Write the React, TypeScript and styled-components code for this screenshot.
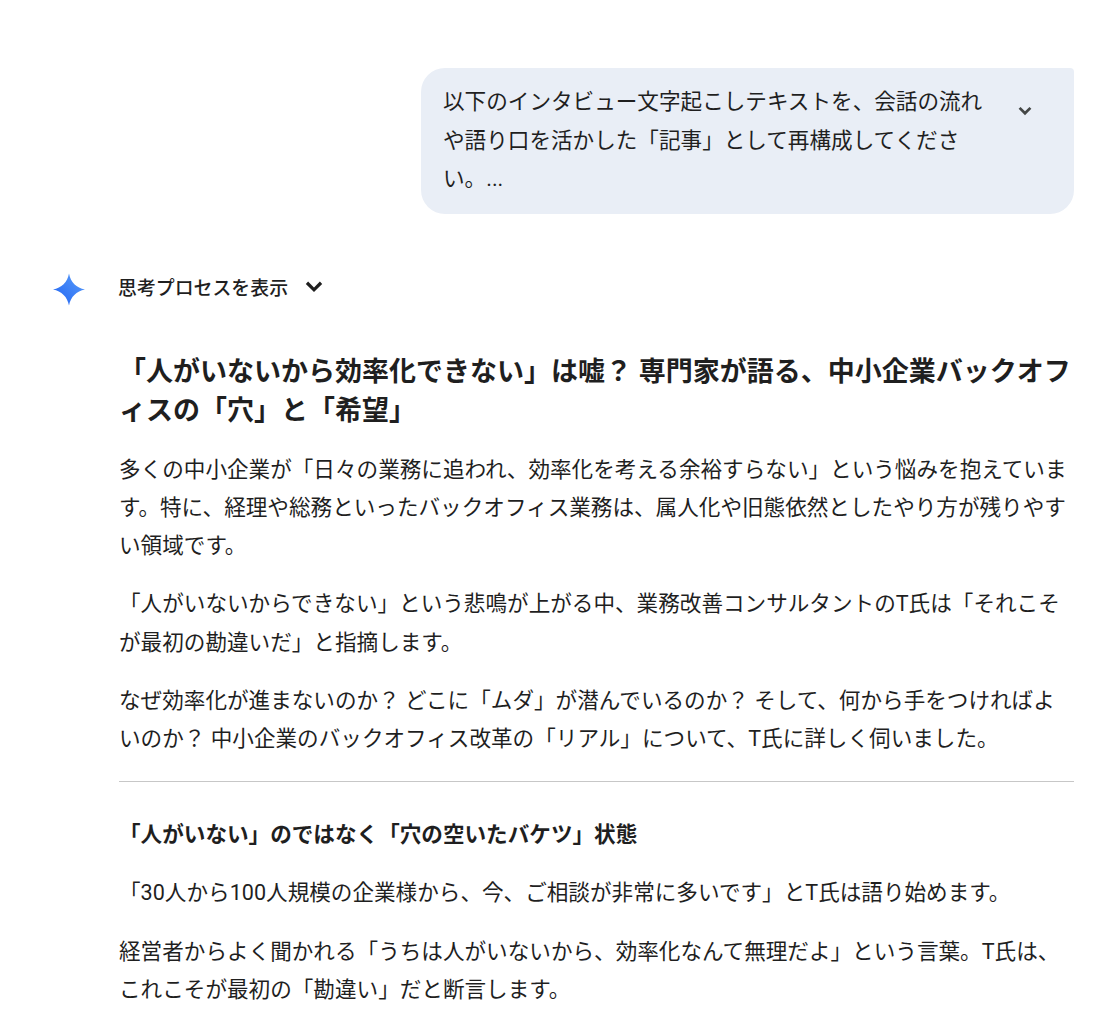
import React from "react";
import styled, { createGlobalStyle } from "styled-components";

const Global = createGlobalStyle`
  html, body { margin: 0; padding: 0; background: #fff; }
  body { font-family: "Roboto", "Noto Sans CJK JP", sans-serif; color: #1f1f1f; }
`;
const Page = styled.div`
  width: 1114px; height: 1027px; overflow: hidden; box-sizing: border-box;
  padding: 68px 40px 0 53px; display: flex; flex-direction: column;
`;
const UserRow = styled.div`display: flex; justify-content: flex-end;`;
const Bubble = styled.div`
  width: 653px; height: 146px; box-sizing: border-box; background: #e9eef6;
  border-radius: 24px 4px 24px 24px; padding: 15px 36px 0 22px; display: flex; justify-content: space-between;
`;
const BubbleText = styled.p`margin: 0; width: 546px; font-size: 21.6px; line-height: 38.7px;`;
const Chevron = styled.svg`flex: none; margin-top: 14px; color: #444746;`;
const Thinking = styled.div`display: flex; align-items: center; margin-top: 55px; height: 34px;`;
const Spark = styled.svg`flex: none; margin-right: 33px; margin-top: 6px;`;
const ThinkLabel = styled.span`font-size: 18.9px; font-weight: 500;`;
const ThinkChevron = styled.svg`flex: none; margin-left: 13px;`;
const Content = styled.div`margin-left: 66px;`;
const Title = styled.h2`margin: 50px 0 0; font-size: 27px; line-height: 39px; font-weight: 700;`;
const Para = styled.p`margin: 19.6px 0 0; font-size: 21.6px; line-height: 38.4px;`;
const LastPara = styled(Para)`margin-top: 21px;`;
const Rule = styled.hr`border: 0; border-top: 1px solid #c7c7c7; margin: 22px 0 0;`;
const Sub = styled.h3`margin: 34px 0 0; font-size: 21.6px; line-height: 38.4px; font-weight: 700;`;

export default function App() {
  return (
    <Page>
      <Global />
      <UserRow>
        <Bubble>
          <BubbleText>以下のインタビュー文字起こしテキストを、会話の流れや語り口を活かした「記事」として再構成してください。...</BubbleText>
          <Chevron width="26" height="26" viewBox="0 0 24 24" fill="none" stroke="currentColor" strokeWidth="2.5"><path d="M7 10l5 5 5-5" /></Chevron>
        </Bubble>
      </UserRow>
      <Thinking>
        <Spark width="32" height="33" viewBox="0 0 32 32">
          <defs><linearGradient id="g" x1="0" y1="1" x2="1" y2="0"><stop offset="0" stopColor="#1f62f2" /><stop offset="1" stopColor="#5b9ffa" /></linearGradient></defs>
          <path d="M16 0C17.500 8.500 23.500 14.500 32 16C23.500 17.500 17.500 23.500 16 32C14.500 23.500 8.500 17.500 0 16C8.500 14.500 14.500 8.500 16 0Z" fill="url(#g)" />
        </Spark>
        <ThinkLabel>思考プロセスを表示</ThinkLabel>
        <ThinkChevron width="26" height="26" viewBox="0 0 24 24" fill="none" stroke="#1f1f1f" strokeWidth="3"><path d="M5.500 9l6.500 6.500L18.500 9" /></ThinkChevron>
      </Thinking>
      <Content>
        <Title>「人がいないから効率化できない」は嘘？ 専門家が語る、中小企業バックオフィスの「穴」と「希望」</Title>
        <Para>多くの中小企業が「日々の業務に追われ、効率化を考える余裕すらない」という悩みを抱えています。特に、経理や総務といったバックオフィス業務は、属人化や旧態依然としたやり方が残りやすい領域です。</Para>
        <Para>「人がいないからできない」という悲鳴が上がる中、業務改善コンサルタントのT氏は「それこそが最初の勘違いだ」と指摘します。</Para>
        <Para>なぜ効率化が進まないのか？ どこに「ムダ」が潜んでいるのか？ そして、何から手をつければよいのか？ 中小企業のバックオフィス改革の「リアル」について、T氏に詳しく伺いました。</Para>
        <Rule />
        <Sub>「人がいない」のではなく「穴の空いたバケツ」状態</Sub>
        <Para>「30人から100人規模の企業様から、今、ご相談が非常に多いです」とT氏は語り始めます。</Para>
        <LastPara>経営者からよく聞かれる「うちは人がいないから、効率化なんて無理だよ」という言葉。T氏は、これこそが最初の「勘違い」だと断言します。</LastPara>
      </Content>
    </Page>
  );
}
